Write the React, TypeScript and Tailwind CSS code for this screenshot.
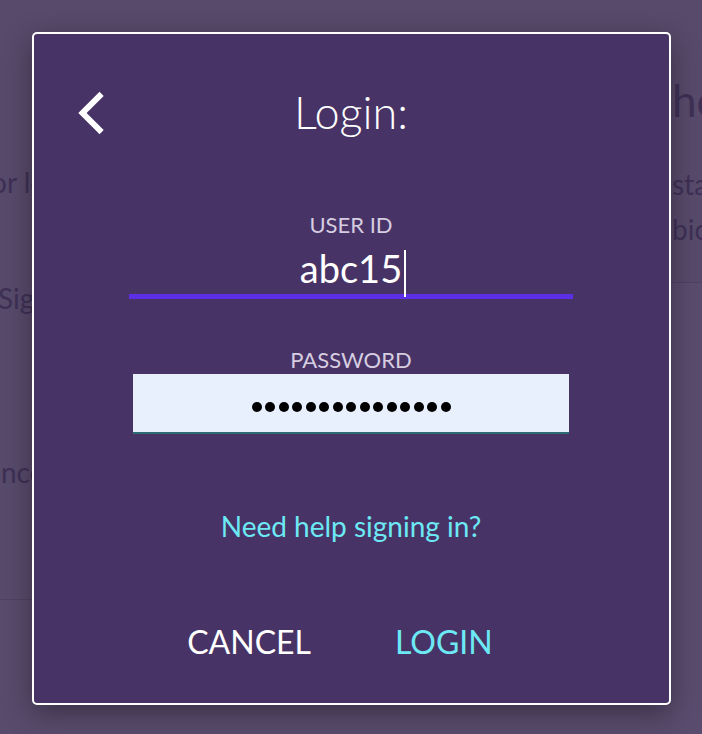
import { ChevronLeft } from "lucide-react";

const font = { fontFamily: "Lato, 'Noto Sans', sans-serif" };

function Backdrop() {
  return (
    <div className="flex h-full w-full bg-[#574a6b] text-[#3e3055]">
      {/* left page column, mostly hidden by the dialog */}
      <div className="w-[672px] shrink-0 flex flex-col">
        <div className="h-[165px]" />
        <p className="-ml-[9px] text-[28px] leading-[34px] whitespace-nowrap">
          or log in with your account
        </p>
        <p className="-ml-[2px] mt-[82px] text-[28px] leading-[34px] whitespace-nowrap">
          Sign in
        </p>
        <p className="-ml-[15px] mt-[140px] text-[28px] leading-[34px] whitespace-nowrap">
          once more
        </p>
        <div className="mt-[110px] flex-1 border-t border-[#4e4163] bg-[#584b6c]" />
      </div>
      {/* right page column */}
      <div className="flex-1 overflow-hidden flex flex-col">
        <div className="h-[78px]" />
        <p className="text-[44px] leading-[44px] whitespace-nowrap">help</p>
        <p className="mt-[40px] text-[28px] leading-[45px] whitespace-nowrap">start</p>
        <p className="text-[28px] leading-[45px] whitespace-nowrap">bio</p>
        <div className="mt-[30px] flex-1 border-t border-[#4e4163] bg-[#594c6e]" />
      </div>
    </div>
  );
}

export default function App() {
  return (
    <div className="relative h-[734px] w-full overflow-hidden" style={font}>
      <Backdrop />

      {/* dialog */}
      <div className="absolute inset-0 flex justify-center pt-[32px]">
        <div className="w-[639px] h-[673px] rounded-[5px] border-2 border-white bg-[#473366] shadow-[0_8px_28px_rgba(0,0,0,0.35)] flex flex-col items-center">
          <div className="relative w-full flex justify-center mt-[50px]">
            <button className="absolute left-[23px] top-[-5px] text-white">
              <ChevronLeft size={68} strokeWidth={2.1} strokeLinecap="square" strokeLinejoin="miter" />
            </button>
            <h1 className="text-[45px] leading-[56px] font-light text-white">Login:</h1>
          </div>

          <label className="mt-[72px] text-[22px] leading-[26px] text-[#d6cde0]">
            USER ID
          </label>
          <div className="mt-[7px] w-[444px] h-[54px] border-b-[5px] border-[#5c2fe6] flex justify-center items-end pb-[3px] pl-[4px]">
            <span className="text-[38px] leading-[46px] text-white">abc15</span>
            <span className="self-start mt-[5px] ml-[2px] w-[2px] h-[47px] bg-white" />
          </div>

          <label className="mt-[48px] text-[22px] leading-[26px] text-[#d6cde0]">
            PASSWORD
          </label>
          <div className="mt-[1px] w-[436px] h-[60px] bg-[#e8effd] border-b-2 border-[#2d6b75] flex justify-center items-center gap-[3.5px] pt-[8px]">
            {Array.from({ length: 15 }).map((_, i) => (
              <span key={i} className="w-[10px] h-[10px] rounded-full bg-black" />
            ))}
          </div>

          <a className="mt-[75px] text-[28px] leading-[34px] text-[#6de9f5]">
            Need help signing in?
          </a>

          <div className="mt-[79px] mr-[22px] flex gap-[84px]">
            <button className="text-[32px] leading-[40px] text-white">
              CANCEL
            </button>
            <button className="text-[32px] leading-[40px] text-[#6de9f5]">
              LOGIN
            </button>
          </div>
        </div>
      </div>
    </div>
  );
}
